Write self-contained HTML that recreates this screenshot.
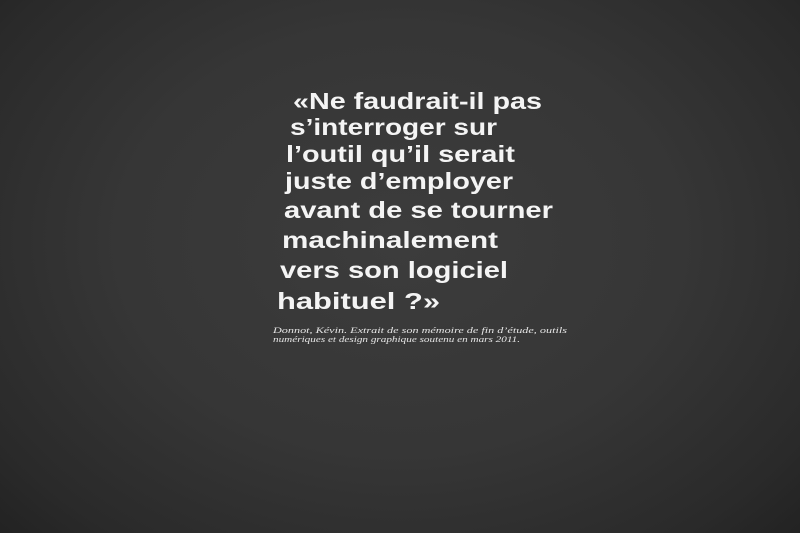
<!DOCTYPE html>
<html><head><meta charset="utf-8"><style>
html,body{margin:0;padding:0;width:800px;height:533px;overflow:hidden;}
body{background:radial-gradient(ellipse 70% 80% at 50% 45%,#3c3c3c 0%,#363636 50%,#2a2a2a 85%,#222 100%);}
svg{position:absolute;left:0;top:0;}
text{font-family:"Liberation Sans",sans-serif;fill:#f4f4f4;}
.q{font-weight:bold;font-size:23px;}
.c{font-family:"Liberation Serif",serif;font-style:italic;font-size:8px;fill:#e6e6e6;}
</style></head><body>
<svg width="800" height="533">
<text class="q" x="293" y="109" textLength="249" lengthAdjust="spacingAndGlyphs">«Ne faudrait-il pas</text>
<text class="q" x="290" y="135" textLength="207" lengthAdjust="spacingAndGlyphs">s’interroger sur</text>
<text class="q" x="286" y="162" textLength="229" lengthAdjust="spacingAndGlyphs">l’outil qu’il serait</text>
<text class="q" x="285" y="189" textLength="228" lengthAdjust="spacingAndGlyphs">juste d’employer</text>
<text class="q" x="284" y="218" textLength="269" lengthAdjust="spacingAndGlyphs">avant de se tourner</text>
<text class="q" x="282" y="248" textLength="216" lengthAdjust="spacingAndGlyphs">machinalement</text>
<text class="q" x="280" y="278" textLength="228" lengthAdjust="spacingAndGlyphs">vers son logiciel</text>
<text class="q" x="277" y="309" textLength="163" lengthAdjust="spacingAndGlyphs">habituel ?»</text>
<text class="c" x="273" y="333" textLength="294" lengthAdjust="spacingAndGlyphs">Donnot, Kévin. Extrait de son mémoire de fin d’étude, outils</text>
<text class="c" x="273" y="342" textLength="247" lengthAdjust="spacingAndGlyphs">numériques et design graphique soutenu en mars 2011.</text>
</svg>
</body></html>
